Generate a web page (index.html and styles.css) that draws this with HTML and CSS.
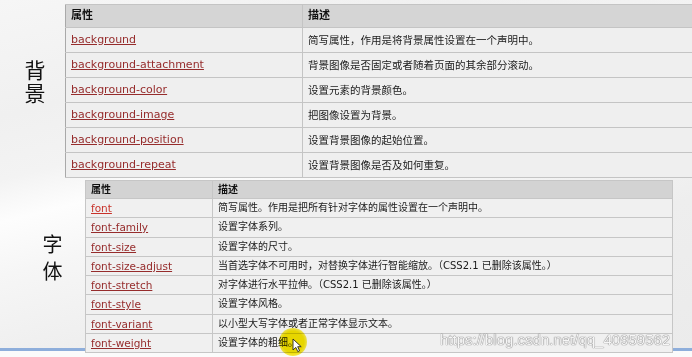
FILE: index.html
```html
<!DOCTYPE html>
<html lang="zh-CN">
<head>
<meta charset="utf-8">
<title>CSS 背景与字体属性</title>
<link rel="stylesheet" href="styles.css">
</head>
<body>
<div class="slide">
  <section class="group group-bg">
    <div class="label"><span class="label-text">背景</span></div>
    <table class="props props-bg">
      <colgroup><col class="c1"><col class="c2"></colgroup>
      <tr><th>属性</th><th>描述</th></tr>
      <tr><td><a href="#">background</a></td><td>简写属性，作用是将背景属性设置在一个声明中。</td></tr>
      <tr><td><a href="#">background-attachment</a></td><td>背景图像是否固定或者随着页面的其余部分滚动。</td></tr>
      <tr><td><a href="#">background-color</a></td><td>设置元素的背景颜色。</td></tr>
      <tr><td><a href="#">background-image</a></td><td>把图像设置为背景。</td></tr>
      <tr><td><a href="#">background-position</a></td><td>设置背景图像的起始位置。</td></tr>
      <tr><td><a href="#">background-repeat</a></td><td>设置背景图像是否及如何重复。</td></tr>
    </table>
  </section>
  <section class="group group-font">
    <div class="label"><span class="label-text">字体</span></div>
    <table class="props props-font">
      <colgroup><col class="c1"><col class="c2"></colgroup>
      <tr><th>属性</th><th>描述</th></tr>
      <tr><td><a href="#" class="fresh">font</a></td><td>简写属性。作用是把所有针对字体的属性设置在一个声明中。</td></tr>
      <tr><td><a href="#">font-family</a></td><td>设置字体系列。</td></tr>
      <tr><td><a href="#">font-size</a></td><td>设置字体的尺寸。</td></tr>
      <tr><td><a href="#">font-size-adjust</a></td><td>当首选字体不可用时，对替换字体进行智能缩放。（CSS2.1 已删除该属性。）</td></tr>
      <tr><td><a href="#">font-stretch</a></td><td>对字体进行水平拉伸。（CSS2.1 已删除该属性。）</td></tr>
      <tr><td><a href="#">font-style</a></td><td>设置字体风格。</td></tr>
      <tr><td><a href="#">font-variant</a></td><td>以小型大写字体或者正常字体显示文本。</td></tr>
      <tr><td><a href="#">font-weight</a></td><td>设置字体的粗细。</td></tr>
    </table>
  </section>
  <div class="highlight"></div>
  <svg class="cursor" width="10" height="15" viewBox="0 0 10 15" aria-hidden="true">
    <path d="M1 1 L1 12 L3.8 9.4 L5.8 13.6 L7.6 12.8 L5.7 8.7 L9.2 8.7 Z" fill="#fff" stroke="#222" stroke-width="0.9" stroke-linejoin="round"/>
  </svg>
  <div class="watermark">https://blog.csdn.net/qq_40959562</div>
</div>
</body>
</html>
```
FILE: styles.css
```css
html, body {
  margin: 0;
  padding: 0;
}
body {
  width: 692px;
  height: 357px;
  overflow: hidden;
  background: #f4f4f4;
}
.slide {
  position: relative;
  width: 692px;
  height: 357px;
  overflow: hidden;
  box-sizing: border-box;
  padding-top: 4px;
  background:
    linear-gradient(to bottom, rgba(0,0,0,0) 348px, #8eaedb 348px, #8eaedb 351px, #fbfbfb 351px),
    linear-gradient(166deg, #f6f6f6 0%, #f0f0f0 22%, #f3f3f3 34%, #fdfdfd 42%, #f6f6f6 52%, #eeeeee 70%, #ebebeb 100%);
}
.group {
  display: flex;
  align-items: flex-start;
}
.label {
  flex: none;
  box-sizing: border-box;
  color: #111;
  font-family: "Noto Sans CJK SC", "Noto Sans CJK JP", sans-serif;
}
.label-text {
  display: block;
  writing-mode: vertical-rl;
  text-orientation: upright;
}
.group-bg .label {
  width: 65px;
  padding-left: 24px;
  padding-top: 56px;
}
.group-bg .label-text {
  font-size: 21px;
  line-height: 21px;
  letter-spacing: 2px;
}
.group-font {
  margin-top: 2px;
}
.group-font .label {
  width: 85px;
  padding-left: 42px;
  padding-top: 54px;
}
.group-font .label-text {
  font-size: 20px;
  line-height: 20px;
  letter-spacing: 7px;
}
.props {
  flex: none;
  border-collapse: collapse;
  table-layout: fixed;
  font-family: "DejaVu Sans", "Noto Sans CJK SC", sans-serif;
  color: #1a1a1a;
}
.props th,
.props td {
  padding: 0 5px;
  text-align: left;
  white-space: nowrap;
  overflow: hidden;
  vertical-align: middle;
}
.props a {
  color: #962c2c;
  text-decoration: underline;
}
.props a.fresh {
  color: #c8322a;
}

/* background table */
.props-bg {
  width: 640px;
}
.props-bg .c1 { width: 237px; }
.props-bg th,
.props-bg td {
  border: 1px solid #c4c4c4;
}
.props-bg tr > :first-child {
  border-left-color: #a9a9a9;
}
.props-bg th {
  background: #d5d5d5;
  font-size: 11px;
  line-height: 22px;
  font-weight: bold;
  color: #111;
}
.props-bg td {
  background: #efefef;
  line-height: 24px;
  font-size: 10.5px;
}
.props-bg td:first-child {
  font-size: 11px;
}

/* font table */
.props-font {
  width: 588px;
}
.props-font .c1 { width: 127px; }
.props-font th,
.props-font td {
  border: 1px solid #c6c6c6;
}
.props-font th {
  background: #d3d3d3;
  font-size: 10px;
  line-height: 17px;
  font-weight: bold;
  color: #111;
}
.props-font td {
  background: #f0f0f0;
  line-height: 18.25px;
  font-size: 10px;
}
.props-font td:first-child {
  font-size: 10.5px;
}

/* overlays */
.highlight {
  position: absolute;
  left: 279px;
  top: 328px;
  width: 28px;
  height: 28px;
  border-radius: 50%;
  background: radial-gradient(circle, rgba(246,228,0,1) 0%, rgba(246,228,0,1) 55%, rgba(246,228,0,0.55) 78%, rgba(246,228,0,0) 100%);
  mix-blend-mode: multiply;
}
.cursor {
  position: absolute;
  left: 292px;
  top: 338px;
}
.watermark {
  position: absolute;
  left: 440px;
  top: 331px;
  font-family: "Liberation Sans", Arial, sans-serif;
  font-size: 15px;
  line-height: 17px;
  color: rgba(255,255,255,0.95);
  text-shadow: 0 0 1px rgba(0,0,0,0.6), 0 0 1px rgba(0,0,0,0.4);
  white-space: nowrap;
}
```
